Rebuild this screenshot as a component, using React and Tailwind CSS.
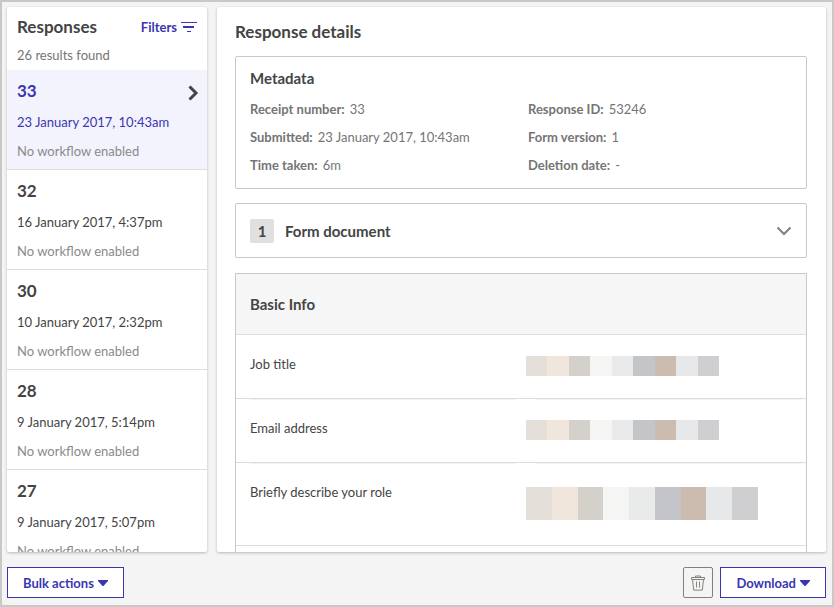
import { useState } from "react";

const responses = [
  { id: 33, date: "23 January 2017, 10:43am" },
  { id: 32, date: "16 January 2017, 4:37pm" },
  { id: 30, date: "10 January 2017, 2:32pm" },
  { id: 28, date: "9 January 2017, 5:14pm" },
  { id: 27, date: "9 January 2017, 5:07pm" },
];

const metadata = [
  ["Receipt number:", "33"],
  ["Response ID:", "53246"],
  ["Submitted:", "23 January 2017, 10:43am"],
  ["Form version:", "1"],
  ["Time taken:", "6m"],
  ["Deletion date:", "-"],
];

function FilterIcon() {
  return (
    <svg className="h-[12px] w-[16px]" viewBox="0 0 16 12" fill="currentColor" shapeRendering="crispEdges" aria-hidden="true">
      <rect x="0" y="1" width="16" height="1" />
      <rect x="2" y="5" width="11" height="2" />
      <rect x="6" y="10" width="4" height="1" />
    </svg>
  );
}

function CaretIcon() {
  return (
    <svg className="h-[6px] w-[10px]" viewBox="0 0 10 6" fill="currentColor" aria-hidden="true">
      <path d="M0 0h10v1L5.5 6h-1L0 1z" />
    </svg>
  );
}

function TrashIcon() {
  return (
    <svg className="h-[16px] w-[14px]" viewBox="0 0 14 16" fill="none" stroke="#83827c" aria-hidden="true">
      <path d="M4.5 2.5V1h5v1.5M.5 2.5h13v2H.5zM1.5 4.5l1.2 10.6h8.6l1.2-10.6M5.5 6.5v6M8.5 6.5v6" />
    </svg>
  );
}

function Redacted({ large }) {
  return (
    <div className={large ? "grid h-[33px] w-[232px] grid-cols-9" : "grid h-[20px] w-[193px] grid-cols-9"}>
      <span className="bg-[#e4dfd9]" />
      <span className="bg-[#f0e6dc]" />
      <span className="bg-[#d4d1cb]" />
      <span className="bg-[#f5f5f3]" />
      <span className="bg-[#e9ebea]" />
      <span className="bg-[#c4c5c9]" />
      <span className="bg-[#cbbcaf]" />
      <span className="bg-[#e7e8ea]" />
      <span className="bg-[#cfcfd1]" />
    </div>
  );
}

function AnswerRow({ label, first, large }) {
  const line = first ? "border-transparent" : "border-[#f3f3f3]";
  return (
    <tr className={large ? "h-[83px] align-top" : "h-[64px] align-top"}>
      <th scope="row" className="w-1/2 border-b border-[#dddddd] pr-[5px] pl-[14px] text-left font-normal">
        <div className={`border-t pt-[18px] ${line}`}>{label}</div>
      </th>
      <td className="border-b border-[#dddddd] pr-[4px] pl-[5px]">
        <div className={`ml-[10px] border-t ${line}`} />
        <div className={large ? "pt-[23px]" : "pt-[20px]"}>
          <Redacted large={large} />
        </div>
      </td>
    </tr>
  );
}

export default function App() {
  const [selected, setSelected] = useState(33);
  return (
    <div className="flex h-screen flex-col border-2 border-[#c8c8c8] bg-[#f4f4f4] pt-[5px] pr-[6px] pb-[7px] pl-[5px] font-[Lato,'Open_Sans',sans-serif] text-[13px] leading-[20px] text-[#444444]">
      <div className="flex min-h-0 flex-1 gap-[10px]">
        <aside className="w-[200px] shrink-0 overflow-hidden rounded-[2px] bg-white shadow-[0_1px_3px_rgba(0,0,0,0.25)]">
          <header className="h-[63px] px-[10px] pt-[8px]">
            <div className="flex items-center justify-between">
              <h2 className="text-[17px] leading-[24px] font-bold">Responses</h2>
              <button type="button" className="flex items-center gap-[4px] font-bold text-[#3a36b0]">
                Filters
                <FilterIcon />
              </button>
            </div>
            <p className="mt-[6px] text-[#757575]">26 results found</p>
          </header>
          <ul>
            {responses.map((r) => {
              const active = r.id === selected;
              return (
                <li key={r.id} className="border-b border-[#dddddd]">
                  <button
                    type="button"
                    aria-pressed={active}
                    onClick={() => setSelected(r.id)}
                    className={`block w-full pt-[9px] pr-[8px] pb-[8px] pl-[10px] text-left ${active ? "bg-[#f3f3fe] text-[#3a36b0]" : ""}`}
                  >
                    <span className="flex items-center justify-between text-[17px] leading-[24px] font-bold">
                      {r.id}
                      {active && (
                        <svg className="mt-[4px] h-[16px] w-[12px]" viewBox="0 0 12 16" fill="none" stroke="#444444" strokeWidth="3" aria-hidden="true">
                          <path d="M2.5 1.5L9 8l-6.5 6.5" />
                        </svg>
                      )}
                    </span>
                    <span className="mt-[9px] block">{r.date}</span>
                    <span className="mt-[9px] block text-[#8a8a8a]">No workflow enabled</span>
                  </button>
                </li>
              );
            })}
          </ul>
        </aside>

        <main className="min-w-0 flex-1 overflow-hidden rounded-[2px] bg-white pr-[19px] pl-[18px] shadow-[0_1px_3px_rgba(0,0,0,0.25)]">
          <h1 className="pt-[13px] pb-[12px] text-[17px] leading-[24px] font-bold">Response details</h1>

          <section className="rounded-[2px] border border-[#c8c8c8] px-[14px] pt-[9px] pb-[13px]">
            <h2 className="text-[15px] leading-[24px] font-bold">Metadata</h2>
            <dl className="mt-[9px] grid grid-cols-2 gap-x-[14px] gap-y-[8px] text-[#757575]">
              {metadata.map(([label, value]) => (
                <div key={label} className="flex gap-[5px]">
                  <dt className="font-bold">{label}</dt>
                  <dd>{value}</dd>
                </div>
              ))}
            </dl>
          </section>

          <button type="button" className="mt-[14px] flex h-[55px] w-full items-center rounded-[2px] border border-[#c8c8c8] px-[14px]">
            <span className="grid h-[24px] w-[24px] place-items-center rounded-[2px] bg-[#e0e0e0] text-[15px] font-bold">1</span>
            <span className="ml-[11px] text-[15px] font-bold">Form document</span>
            <svg className="ml-auto h-[10px] w-[16px]" viewBox="0 0 16 10" fill="none" stroke="#808080" strokeWidth="2" aria-hidden="true">
              <path d="M1.5 1.5l6.5 6.5 6.5-6.5" />
            </svg>
          </button>

          <section className="mt-[15px] border border-[#c8c8c8]">
            <h2 className="border-b border-[#dddddd] bg-[#f6f6f6] px-[14px] py-[20px] text-[15px] font-bold">Basic Info</h2>
            <table className="w-full table-fixed border-separate border-spacing-0">
              <tbody>
                <AnswerRow label="Job title" first />
                <AnswerRow label="Email address" />
                <AnswerRow label="Briefly describe your role" large />
                <tr className="h-[64px]">
                  <td colSpan={2} />
                </tr>
              </tbody>
            </table>
          </section>
        </main>
      </div>

      <footer className="mt-[15px] flex h-[31px] shrink-0 gap-[7px] font-bold text-[#3a36b0]">
        <button type="button" aria-haspopup="menu" className="mr-auto flex items-center gap-[4px] border border-[#3a36b0] bg-white px-[15px]">
          Bulk actions
          <CaretIcon />
        </button>
        <button type="button" aria-label="Delete" className="grid w-[30px] place-items-center rounded-[2px] border border-[#808080]">
          <TrashIcon />
        </button>
        <button type="button" aria-haspopup="menu" className="flex items-center gap-[4px] border border-[#3a36b0] bg-white px-[15px]">
          Download
          <CaretIcon />
        </button>
      </footer>
    </div>
  );
}
